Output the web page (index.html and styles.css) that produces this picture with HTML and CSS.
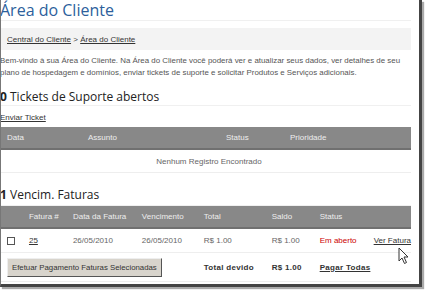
FILE: index.html
```html
<!DOCTYPE html>
<html lang="pt-BR">
<head>
<meta charset="utf-8">
<link rel="stylesheet" href="styles.css">
</head>
<body>
<div class="frame">
  <div class="page">
    <h1 class="title">Área do Cliente</h1>
    <div class="crumbs"><a href="#">Central do Cliente</a> &gt; <a href="#">Área do Cliente</a></div>
    <p class="intro">Bem-vindo à sua Área do Cliente. Na Área do Cliente você poderá ver e atualizar seus dados, ver detalhes de seu plano de hospedagem e domínios, enviar tickets de suporte e solicitar Produtos e Serviços adicionais.</p>
    <h2 class="sec">0 Tickets de Suporte abertos</h2>
    <a class="send" href="#">Enviar Ticket</a>
    <table class="grid tickets">
      <thead><tr><th class="c-data">Data</th><th class="c-ass">Assunto</th><th class="c-st">Status</th><th>Prioridade</th></tr></thead>
      <tbody><tr><td colspan="4" class="empty">Nenhum Registro Encontrado</td></tr></tbody>
    </table>
    <h2 class="sec sec2">1 Vencim. Faturas</h2>
    <table class="grid invoices">
      <thead><tr><th class="c-cb"></th><th class="c-num">Fatura #</th><th class="c-d1">Data da Fatura</th><th class="c-d2">Vencimento</th><th class="c-tot">Total</th><th class="c-sal">Saldo</th><th class="c-sta">Status</th><th></th></tr></thead>
      <tbody>
        <tr><td class="c-cb"><span class="cb"></span></td><td><a href="#">25</a></td><td>26/05/2010</td><td>26/05/2010</td><td>R$ 1.00</td><td>R$ 1.00</td><td class="open">Em aberto</td><td><a href="#">Ver Fatura</a></td></tr>
        <tr class="foot"><td colspan="4"><button class="pay">Efetuar Pagamento Faturas Selecionadas</button></td><td class="b">Total devido</td><td class="b">R$ 1.00</td><td colspan="2"><a class="b" href="#">Pagar Todas</a></td></tr>
      </tbody>
    </table>
    <svg class="cursor" width="12" height="18" viewBox="0 0 12 18"><path d="M1 1 L1 14 L4 11 L6.5 16.5 L8.5 15.5 L6 10 L10 10 Z" fill="#fff" stroke="#333" stroke-width="1"/></svg>
  </div>
</div>
</body>
</html>
```
FILE: styles.css
```css
html, body { margin: 0; padding: 0; background: #fff; }
body { width: 425px; height: 290px; overflow: hidden; font-family: "Liberation Sans", Arial, sans-serif; }
.frame { width: 425px; height: 290px; box-sizing: border-box; position: relative; }
.page {
  position: relative;
  width: 422px; height: 287px; box-sizing: border-box;
  border-left: 1px solid #777;
  border-right: 3px solid #444;
  border-bottom: 3px solid #444;
  box-shadow: 2px 2px 1px #aaa;
  overflow: hidden;
  padding: 0 8px 0 0;
}
.title { margin: 0 0 0 -1px; font-family: "Open Sans", sans-serif; font-weight: 400; font-size: 16px; line-height: 20px; color: #2d5f9c; border-bottom: 1px solid #f0f0f0; height: 20px; }
.crumbs { margin-top: 7px; background: #f3f3f3; height: 22px; line-height: 23px; font-size: 8px; color: #444; padding-left: 6px; }
.crumbs a, a { color: #333; }
.intro { margin: 5px 0 0 -1px; font-size: 7.9px; line-height: 12px; color: #555; }
.sec { margin: 10px 0 0 -1px; font-family: "Open Sans", sans-serif; font-weight: 400; font-size: 12px; line-height: 15px; color: #222; border-bottom: 1px solid #f0f0f0; padding-bottom: 1px; }
.sec::first-letter { font-weight: 700; }
.send { display: block; font-size: 8px; margin: 6px 0 0 -1px; line-height: 12px; }
.grid { width: 100%; border-collapse: collapse; font-size: 8px; margin-top: 3px; white-space: nowrap; }
.grid th { background: #888; color: #eee; font-weight: 400; text-align: left; height: 21px; padding: 0 0 0 6px; border-bottom: 2px solid #707070; }
.grid td { color: #666; height: 22px; padding: 0 0 0 6px; border-bottom: 1px solid #eee; }
.tickets .empty { text-align: center; }
.c-data { width: 75px; }
.c-ass { width: 132px; }
.c-st { width: 58px; }
.sec2 { margin-top: 14px; padding-bottom: 3px; }
.invoices { margin-top: 0; }
.c-cb { width: 16px; }
.c-num { width: 38px; }
.c-d1 { width: 63px; }
.c-d2 { width: 56px; }
.c-tot { width: 62px; }
.c-sal { width: 42px; }
.c-sta { width: 48px; }
.invoices tbody tr:first-child td { height: 23px; }
.cb { display: inline-block; width: 6px; height: 6px; border: 1px solid #555; background: #fff; vertical-align: middle; }
.open { color: #c00 !important; }
.foot td { height: 28px; }
.b { font-weight: 700; color: #333 !important; letter-spacing: 0.3px; }
.pay { font-family: "Liberation Sans", sans-serif; font-size: 7.8px; color: #333; background: #d8d4cc; border: 1px solid; border-color: #eee #555 #555 #eee; padding: 4px 4px; }
.cursor { position: absolute; left: 397px; top: 247px; }
```
